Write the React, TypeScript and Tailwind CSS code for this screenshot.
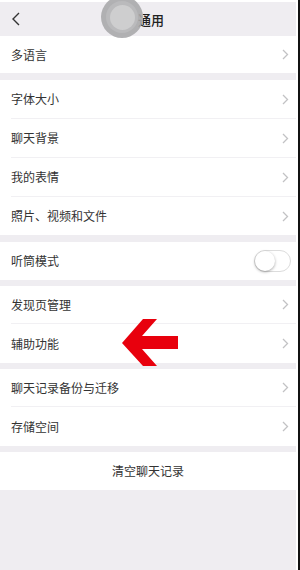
import React from 'react';

const font = { fontFamily: '"Noto Sans CJK SC", "Noto Sans", sans-serif' };

const Chevron = () => (
  <svg width="7" height="11" viewBox="0 0 7 11" className="shrink-0">
    <path d="M1 1l4.5 4.5L1 10" fill="none" stroke="#c2c2c4" strokeWidth="1.3" />
  </svg>
);

interface RowProps {
  label: string;
  h: string;
  last?: boolean;
  right?: React.ReactNode;
}

const Row: React.FC<RowProps> = ({ label, h, last = false, right }) => (
  <div className={`bg-white pl-[11px] ${h}`}>
    <div className={`h-full flex items-center justify-between pr-[7px] ${last ? '' : 'border-b border-[#f1f0f3]'}`}>
      <span className="text-[12px] text-[#333333] leading-none">{label}</span>
      {right ?? <Chevron />}
    </div>
  </div>
);

const Gap = ({ h }: { h: string }) => <div className={`${h} bg-[#efedf1]`} />;

const Toggle = () => (
  <div className="relative w-[37px] h-[22px] rounded-full border border-[#dcdcdc] bg-white -mr-[2px]">
    <div className="absolute left-0 top-0 w-[20px] h-[20px] rounded-full bg-white shadow-[0_1px_3px_rgba(0,0,0,0.35)]" />
  </div>
);

export default function App() {
  return (
    <div className="w-[300px] h-[570px] flex overflow-hidden" style={font}>
      <div className="relative w-[296px] h-full bg-[#efedf1] flex flex-col">
        <div className="h-[2px] bg-white" />
        {/* header */}
        <div className="h-[34px] bg-[#efedf1] flex items-center relative">
          <svg width="10" height="14" viewBox="0 0 10 14" className="ml-[11px]">
            <path d="M8 1L2 7l6 6" fill="none" stroke="#333" strokeWidth="1.4" />
          </svg>
          <span className="absolute left-[138px] text-[13px] text-[#222] font-medium leading-none">通用</span>
        </div>

        <Row label="多语言" h="h-[37px]" last />
        <Gap h="h-[7px]" />
        <Row label="字体大小" h="h-[39px]" />
        <Row label="聊天背景" h="h-[39px]" />
        <Row label="我的表情" h="h-[39px]" />
        <Row label="照片、视频和文件" h="h-[38px]" last />
        <Gap h="h-[7px]" />
        <Row label="听筒模式" h="h-[38px]" last right={<Toggle />} />
        <Gap h="h-[6px]" />
        <Row label="发现页管理" h="h-[38px]" />
        <Row label="辅助功能" h="h-[39px]" last />
        <Gap h="h-[6px]" />
        <Row label="聊天记录备份与迁移" h="h-[38px]" />
        <Row label="存储空间" h="h-[39px]" last />
        <Gap h="h-[6px]" />
        <div className="bg-white h-[38px] flex items-center justify-center">
          <span className="text-[12px] text-[#333333] leading-none">清空聊天记录</span>
        </div>

        {/* touch indicator */}
        <div className="absolute left-[101px] top-[-4px] w-[42px] h-[42px] rounded-full bg-[#a9a9ab]/90 flex items-center justify-center">
          <div className="w-[32px] h-[32px] rounded-full bg-[#bababc] flex items-center justify-center">
            <div className="w-[25px] h-[25px] rounded-full bg-[#cececf]" />
          </div>
        </div>

        {/* red arrow */}
        <svg className="absolute left-[120px] top-[316px]" width="60" height="54" viewBox="0 0 60 54">
          <polygon points="2,27 23,3 37,3 22,20 58,20 58,33 22,33 37,50 23,50" fill="#e8000d" />
        </svg>
      </div>
      <div className="w-[2px] h-full bg-white" />
      <div className="w-[2px] h-full bg-[#111]" />
    </div>
  );
}
